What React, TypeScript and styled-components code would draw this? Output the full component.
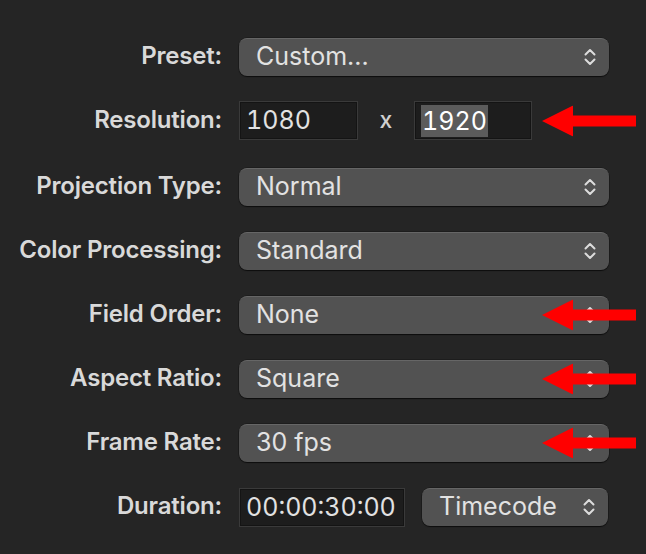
import React from "react";
import styled, { createGlobalStyle } from "styled-components";

const Global = createGlobalStyle`
  html, body { margin: 0; padding: 0; background: #252525; }
  body { width: 646px; height: 554px; overflow: hidden; font-family: Inter, "Noto Sans", sans-serif; }
`;

const Panel = styled.div`
  width: 646px;
  height: 554px;
  box-sizing: border-box;
  padding-top: 28px;
  display: flex;
  flex-direction: column;
  background: #252525;
`;

const Row = styled.div<{ $h: number }>`
  position: relative;
  height: ${(p) => p.$h}px;
  display: grid;
  grid-template-columns: 222px 370px;
  column-gap: 17px;
  align-items: center;
`;

const Label = styled.div`
  text-align: right;
  font-size: 24px;
  font-weight: 600;
  color: #d9d9d9;
  letter-spacing: -0.2px;
  line-height: 1;
  padding-bottom: 2px;
`;

const Controls = styled.div`
  display: flex;
  align-items: center;
  gap: 17px;
`;

const Popup = styled.div<{ $w?: number }>`
  box-sizing: border-box;
  width: ${(p) => (p.$w ? `${p.$w}px` : "370px")};
  height: 38px;
  border-radius: 8px;
  background: #525252;
  border-top: 1px solid #666;
  box-shadow: 0 1px 1px rgba(0, 0, 0, 0.55), 0 0 0 0.5px rgba(0, 0, 0, 0.4);
  display: flex;
  align-items: center;
  justify-content: space-between;
  padding: 0 13px 2px 17px;
  font-size: 25px;
  line-height: 1;
  color: #e2e2e2;
`;

const Field = styled.div<{ $w: number }>`
  box-sizing: border-box;
  width: ${(p) => p.$w}px;
  height: 39px;
  background: #1d1d1d;
  border: 1px solid #3a3a3a;
  outline: 1px solid #141414;
  outline-offset: -2px;
  display: flex;
  align-items: center;
  padding-left: 6px;
  font-size: 25px;
  line-height: 1;
  color: #e2e2e2;
  font-feature-settings: "tnum";
`;

const Selected = styled.span`
  background: #5b5b5b;
  color: #fff;
  padding: 4px 1px 3px;
`;

const Times = styled.span`
  width: 22px;
  text-align: center;
  font-size: 23px;
  font-weight: 500;
  color: #d0d0d0;
  padding-bottom: 2px;
`;

const ArrowWrap = styled.div`
  position: absolute;
  right: 10px;
  top: 50%;
  transform: translateY(-50%);
  width: 94px;
  height: 31px;
  line-height: 0;
`;

const Chevrons = () => (
  <svg width="12" height="18" viewBox="0 0 12 18" fill="none" style={{ flex: "none" }}>
    <path d="M1.5 6.5 L6 2 L10.5 6.5" stroke="#dcdcdc" strokeWidth="2" strokeLinecap="round" strokeLinejoin="round" />
    <path d="M1.5 11.5 L6 16 L10.5 11.5" stroke="#dcdcdc" strokeWidth="2" strokeLinecap="round" strokeLinejoin="round" />
  </svg>
);

const Arrow = () => (
  <ArrowWrap>
    <svg width="94" height="31" viewBox="0 0 94 31">
      <polygon points="0,15.5 31,0 31,10 94,10 94,21 31,21 31,31" fill="#ff0000" />
    </svg>
  </ArrowWrap>
);

const PopupRow = ({ label, value, h, arrow }: { label: string; value: string; h: number; arrow?: boolean }) => (
  <Row $h={h}>
    <Label>{label}</Label>
    <Popup>
      <span>{value}</span>
      <Chevrons />
    </Popup>
    {arrow && <Arrow />}
  </Row>
);

export default function App() {
  return (
    <>
      <Global />
      <Panel>
        <PopupRow label="Preset:" value="Custom..." h={58} />
        <Row $h={69}>
          <Label>Resolution:</Label>
          <Controls>
            <Field $w={119}>1080</Field>
            <Times>x</Times>
            <Field $w={118}>
              <Selected>1920</Selected>
            </Field>
          </Controls>
          <Arrow />
        </Row>
        <PopupRow label="Projection Type:" value="Normal" h={64} />
        <PopupRow label="Color Processing:" value="Standard" h={64} />
        <PopupRow label="Field Order:" value="None" h={64} arrow />
        <PopupRow label="Aspect Ratio:" value="Square" h={64} arrow />
        <PopupRow label="Frame Rate:" value="30 fps" h={64} arrow />
        <Row $h={64}>
          <Label>Duration:</Label>
          <Controls>
            <Field $w={166}>00:00:30:00</Field>
            <Popup $w={186}>
              <span>Timecode</span>
              <Chevrons />
            </Popup>
          </Controls>
        </Row>
      </Panel>
    </>
  );
}
